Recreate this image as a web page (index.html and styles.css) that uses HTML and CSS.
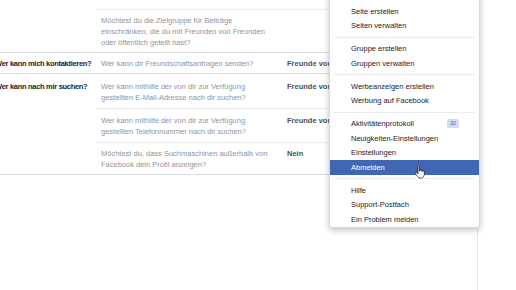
FILE: index.html
```html
<!DOCTYPE html>
<html lang="de">
<head>
    <meta charset="UTF-8">
    <title>Privatsphäre-Einstellungen</title>
    <link rel="stylesheet" href="styles.css">
</head>
<body>

<div class="page">
    <div class="privacy">
        <!-- Wer kann meine Inhalte sehen? -->
        <div class="section">
            <div class="label">Wer kann meine Inhalte sehen?</div>
            <div class="rows">
                <div class="row row-cut">
                    <div class="desc">Überprüfe alle deine Beiträge und Inhalte, in denen du markiert bist.</div>
                    <div class="value"></div>
                </div>
                <div class="row">
                    <div class="desc">Möchtest du die Zielgruppe für Beiträge einschränken, die du mit Freunden von Freunden oder öffentlich geteilt hast?</div>
                    <div class="value"></div>
                </div>
            </div>
        </div>

        <!-- Wer kann mich kontaktieren? -->
        <div class="section">
            <div class="label">Wer kann mich kontaktieren?</div>
            <div class="rows">
                <div class="row">
                    <div class="desc">Wer kann dir Freundschaftsanfragen senden?</div>
                    <div class="value">Freunde von Freunden</div>
                </div>
            </div>
        </div>

        <!-- Wer kann nach mir suchen? -->
        <div class="section section-loose">
            <div class="label">Wer kann nach mir suchen?</div>
            <div class="rows">
                <div class="row row-first">
                    <div class="desc">Wer kann mithilfe der von dir zur Verfügung gestellten E-Mail-Adresse nach dir suchen?</div>
                    <div class="value">Freunde von Freunden</div>
                </div>
                <div class="row row-mid">
                    <div class="desc">Wer kann mithilfe der von dir zur Verfügung gestellten Telefonnummer nach dir suchen?</div>
                    <div class="value">Freunde von Freunden</div>
                </div>
                <div class="row">
                    <div class="desc">Möchtest du, dass Suchmaschinen außerhalb von Facebook dein Profil anzeigen?</div>
                    <div class="value">Nein</div>
                </div>
            </div>
        </div>
    </div>
</div>

<!-- Account dropdown -->
<ul class="menu">
    <li>Neue Gruppen</li>
    <li class="sep"></li>
    <li>Seite erstellen</li>
    <li>Seiten verwalten</li>
    <li class="sep"></li>
    <li>Gruppe erstellen</li>
    <li>Gruppen verwalten</li>
    <li class="sep"></li>
    <li>Werbeanzeigen erstellen</li>
    <li>Werbung auf Facebook</li>
    <li class="sep"></li>
    <li>Aktivitätenprotokoll <span class="badge">32</span></li>
    <li>Neuigkeiten-Einstellungen</li>
    <li>Einstellungen</li>
    <li class="active">Abmelden</li>
    <li class="sep"></li>
    <li>Hilfe</li>
    <li>Support-Postfach</li>
    <li>Ein Problem melden</li>
</ul>

<!-- mouse pointer over "Abmelden" -->
<svg class="cursor" width="10" height="13" viewBox="0 0 20 26">
    <path d="M6 1.5c0-.8.6-1.5 1.5-1.5S9 .7 9 1.5V10h.5V8.5c0-.8.6-1.4 1.4-1.4s1.4.6 1.4 1.4v2h.4v-1c0-.8.6-1.4 1.4-1.4s1.4.6 1.4 1.4V11h.4v-.5c0-.8.6-1.3 1.3-1.3s1.3.5 1.3 1.3V17c0 3.5-2.5 7-6 7H10c-2.5 0-3.5-1-5-3L1 15c-.6-.8-.5-1.8.3-2.3.8-.5 1.8-.3 2.4.4L6 15.5z" fill="#fff" stroke="#000" stroke-width="1.3" stroke-linejoin="round"/>
</svg>

</body>
</html>
```

FILE: styles.css
```css
body {
    margin: 0;
    font-family: "Liberation Sans", Arial, sans-serif;
    font-size: 7.5px;
    background-color: #fff;
    overflow: hidden;
}

.page {
    width: 477px;
    height: 290px;
    border-right: 1px solid #e1e3e6;
    overflow: hidden;
}

.privacy {
    margin: -22px 0 0 -5px;
}

.section {
    display: flex;
    border-bottom: 1px solid #dadde1;
}

.label {
    width: 101px;
    flex-shrink: 0;
    padding-top: 5px;
    line-height: 11px;
    font-weight: bold;
    color: #1d2129;
    letter-spacing: -0.3px;
    white-space: nowrap;
}

.rows {
    flex: 1;
}

.row {
    display: flex;
    padding: 5px 0 4px 5px;
    line-height: 11px;
    border-bottom: 1px solid #e9ebee;
}

.row:last-child {
    border-bottom: none;
}

/* only the tail of this row is still on screen */
.row-cut {
    padding-top: 2px;
    padding-bottom: 7px;
}

/* the search section sits a little looser */
.section-loose .label {
    padding-top: 7px;
}

.row-first {
    padding-top: 7px;
    padding-bottom: 5px;
}

.row-mid {
    padding-top: 6px;
    padding-bottom: 5px;
}

.desc {
    width: 176px;
    flex-shrink: 0;
    margin-right: 10px;
    color: #90949c;
}

.value {
    font-weight: bold;
    color: #4b4f56;
    white-space: nowrap;
}

/* Dropdown menu */
.menu {
    position: absolute;
    left: 329px;
    top: -20px;
    width: 151px;
    box-sizing: border-box;
    margin: 0;
    padding: 0;
    list-style: none;
    background-color: #fff;
    border: 1px solid rgba(0, 0, 0, 0.15);
    border-radius: 3px;
    box-shadow: 0 2px 6px rgba(0, 0, 0, 0.25);
}

.menu li {
    display: flex;
    justify-content: space-between;
    align-items: center;
    height: 14.6px;
    padding: 0 20px 0 21px;
    color: #1d2129;
    white-space: nowrap;
}

.menu li.sep {
    height: 1px;
    padding: 0;
    margin: 3.65px 4px;
    background-color: #e9ebee;
}

.menu li.active {
    background-color: #4267b2;
    color: #fff;
}

.badge {
    height: 9px;
    line-height: 9px;
    padding: 0 3px;
    border-radius: 2px;
    background-color: #d3dcef;
    color: #4267b2;
    font-size: 5.5px;
}

.cursor {
    position: absolute;
    left: 415px;
    top: 166px;
}
```
